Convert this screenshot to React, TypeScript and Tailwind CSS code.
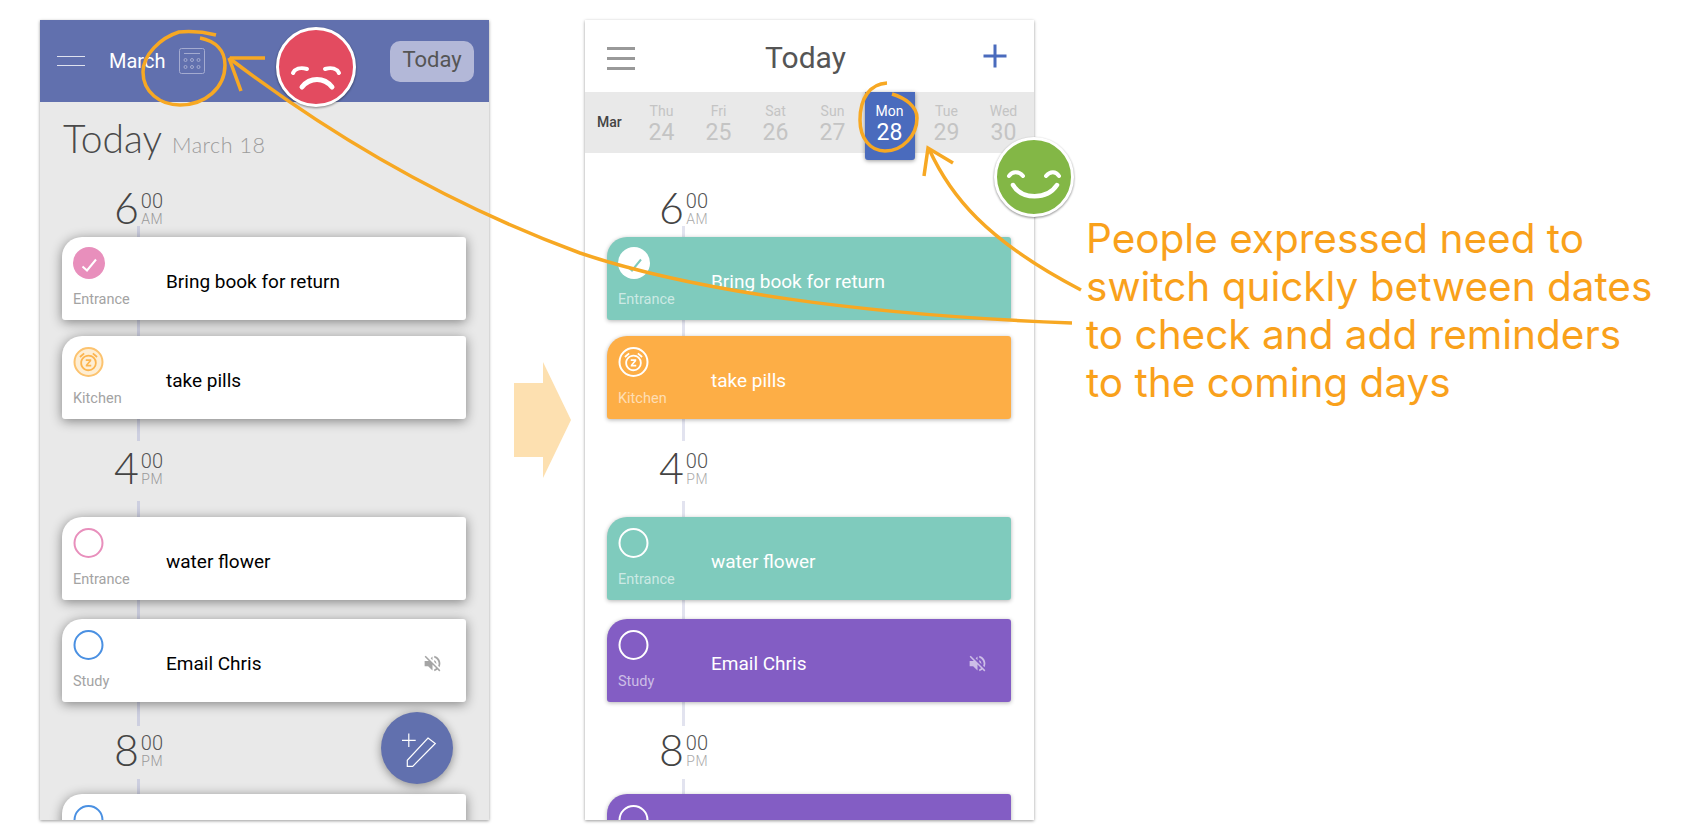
import type { ReactNode } from 'react';
import { MdSnooze, MdVolumeOff } from 'react-icons/md';

const roboto = { fontFamily: 'Roboto, "Liberation Sans", sans-serif' };

interface CardProps {
  bg: string;
  label?: string;
  title?: string;
  icon: ReactNode;
  muted?: boolean;
  shadow: string;
  textClass: string;
  labelClass: string;
  mutedClass?: string;
}

function Card({ bg, label, title, icon, muted, shadow, textClass, labelClass, mutedClass }: CardProps) {
  return (
    <div className={`relative flex h-[83px] shrink-0 items-center rounded-tl-[20px] rounded-tr-[3px] rounded-br-[3px] rounded-bl-[3px] ${bg} ${shadow}`}>
      <div className="flex h-full w-[104px] shrink-0 flex-col pl-[11px] pt-[10px]">
        <div className="h-[32px] w-[32px]">{icon}</div>
        <div className={`mt-[12px] text-[14.5px] leading-[18px] ${labelClass}`}>{label}</div>
      </div>
      <div className={`flex-1 pt-[7px] text-[19px] leading-[24px] ${textClass}`}>{title}</div>
      {muted && <MdVolumeOff className={`mr-[23px] mt-[6px] text-[21px] ${mutedClass}`} />}
    </div>
  );
}

function Ring({ color }: { color: string }) {
  return <div className={`h-[30px] w-[30px] translate-x-[0.5px] translate-y-[1px] rounded-full border-2 ${color}`} />;
}

function Snooze({ color }: { color: string }) {
  return (
    <div className={`flex h-[30px] w-[30px] translate-x-[0.5px] translate-y-[1px] items-center justify-center rounded-full border-2 text-[22px] ${color}`}>
      <MdSnooze />
    </div>
  );
}

function Check({ circle, stroke }: { circle: string; stroke: string }) {
  return (
    <svg viewBox="0 0 32 32" className="h-[32px] w-[32px]">
      <circle cx="16" cy="16" r="16" className={circle} />
      <path d="M9.5 19.5l4.5 4 9-11" fill="none" strokeWidth="2" className={stroke} />
    </svg>
  );
}

function Stem({ className, color }: { className: string; color: string }) {
  return <div className={`ml-[97px] w-[3px] shrink-0 ${color} ${className}`} />;
}

function TimeRow({ hour, unit, className, unitClass }: { hour: string; unit: string; className: string; unitClass: string }) {
  return (
    <div className={`flex h-[36px] shrink-0 pl-[74px] ${className}`}>
      <div className="w-[27px] font-light text-[#444] text-[43px] leading-[36px]" style={{ fontFamily: 'Lato, sans-serif' }}>{hour}</div>
      <div className="flex w-[22px] flex-col items-end" style={roboto}>
        <div className="mt-[2px] text-[20px] font-light leading-[18px] text-[#555]">00</div>
        <div className={`mt-[2px] text-[14px] font-light tracking-[0.5px] leading-[15px] ${unitClass}`}>{unit}</div>
      </div>
    </div>
  );
}

function Timeline({ variant }: { variant: 'before' | 'after' }) {
  const before = variant === 'before';
  const shadow = before ? 'shadow-[0_2px_12px_rgba(0,0,0,0.45)]' : 'shadow-[0_1px_4px_rgba(0,0,0,0.3)]';
  const stem = before ? 'bg-[#cdcfe0]' : 'bg-[#e2e3ef]';
  const textClass = before ? 'text-black' : 'text-white';
  const labelClass = before ? 'text-[#a3a3a3]' : 'text-white/60';
  const unitClass = before ? 'text-[#999]' : 'text-[#aaa]';
  const mutedClass = before ? 'text-[#a5a5a5]' : 'text-white/60';
  const bg = (color: string) => (before ? 'bg-white' : color);
  const common = { shadow, textClass, labelClass };

  return (
    <div className="flex flex-col">
      <TimeRow hour="6" unit="AM" className="" unitClass={unitClass} />
      <Stem className="h-[11px]" color={stem} />
      <div className="flex flex-col pl-[22px] pr-[23px]">
        <Card {...common} bg={bg('bg-[#7fcbbd]')} label="Entrance" title="Bring book for return"
          icon={before ? <Check circle="fill-[#e88fbc]" stroke="stroke-white" /> : <Check circle="fill-white" stroke="stroke-[#7fcbbd]" />} />
      </div>
      <Stem className="h-[16px]" color={stem} />
      <div className="flex flex-col pl-[22px] pr-[23px]">
        <Card {...common} bg={bg('bg-[#fdae46]')} label="Kitchen" title="take pills"
          icon={<Snooze color={before ? 'border-[#fcc36f] bg-[#feeed4] text-[#fcb54f]' : 'border-white text-white'} />} />
      </div>
      <Stem className="h-[22px]" color={stem} />
      <TimeRow hour="4" unit="PM" className="mt-[9px] mb-[15px]" unitClass={unitClass} />
      <Stem className="h-[16px]" color={stem} />
      <div className="flex flex-col pl-[22px] pr-[23px]">
        <Card {...common} bg={bg('bg-[#7fcbbd]')} label="Entrance" title="water flower"
          icon={<Ring color={before ? 'border-[#e88fbc]' : 'border-white'} />} />
      </div>
      <Stem className="h-[19px]" color={stem} />
      <div className="flex flex-col pl-[22px] pr-[23px]">
        <Card {...common} bg={bg('bg-[#835dc4]')} label="Study" title="Email Chris" muted mutedClass={mutedClass}
          icon={<Ring color={before ? 'border-[#4a90e2]' : 'border-white'} />} />
      </div>
      <Stem className="h-[24px]" color={stem} />
      <TimeRow hour="8" unit="PM" className="mt-[6px] mb-[11px]" unitClass={unitClass} />
      <Stem className="h-[15px]" color={stem} />
      <div className="flex flex-col pl-[22px] pr-[23px]">
        <Card {...common} bg={bg('bg-[#835dc4]')} icon={<Ring color={before ? 'border-[#4a90e2]' : 'border-white'} />} />
      </div>
    </div>
  );
}

function BeforePhone() {
  return (
    <div className="relative h-[800px] w-[449px] shrink-0 overflow-hidden bg-[#e9e9e9] shadow-[0_1px_3px_rgba(0,0,0,0.4)]" style={roboto}>
      <div className="flex h-[82px] items-center bg-[#6170ae] pl-[17px] pr-[15px]">
        <div className="flex w-[52px] flex-col gap-[8px]">
          <div className="h-px w-[28px] bg-white/80" />
          <div className="h-px w-[28px] bg-white/80" />
        </div>
        <div className="text-[20px] text-white">March</div>
        <svg viewBox="0 0 26 26" className="ml-[14px] h-[26px] w-[26px]" fill="none" stroke="#a4abd0">
          <rect x="0.5" y="0.5" width="25" height="25" rx="2" />
          <path d="M5 5.5h16" />
          <circle cx="6.5" cy="12" r="1.5" />
          <circle cx="13" cy="12" r="1.5" />
          <circle cx="19.5" cy="12" r="1.5" />
          <circle cx="6.5" cy="19" r="1.5" />
          <circle cx="13" cy="19" r="1.5" />
          <circle cx="19.5" cy="19" r="1.5" />
        </svg>
        <div className="ml-auto flex h-[41px] w-[84px] items-center justify-center rounded-[10px] bg-[#b3b8d8] pb-[3px] text-[22px] text-[#555]">Today</div>
      </div>
      <div className="flex h-[88px] items-baseline pl-[23px] pt-[7px]" style={{ fontFamily: 'Lato, sans-serif' }}>
        <span className="text-[39px] font-light text-[#4a4a4a]">Today</span>
        <span className="ml-[10px] text-[21.5px] font-light tracking-[0.5px] text-[#9b9b9b]">March 18</span>
      </div>
      <Timeline variant="before" />
      <div className="absolute left-[341px] top-[692px] flex h-[72px] w-[72px] items-center justify-center rounded-full bg-[#6170ae] shadow-[0_2px_10px_rgba(0,0,0,0.4)]">
        <svg viewBox="0 0 40 40" className="h-[40px] w-[40px]" fill="none" stroke="#fff" strokeWidth="1.2">
          <path d="M5 12.3H18.7M11.8 5.5V19" />
          <path d="M31 10L38.3 15.5L15.7 38.3H10.3V32.3z" />
        </svg>
      </div>
    </div>
  );
}

const days = [
  ['Thu', '24'],
  ['Fri', '25'],
  ['Sat', '26'],
  ['Sun', '27'],
  ['Mon', '28'],
  ['Tue', '29'],
  ['Wed', '30'],
];

function AfterPhone() {
  return (
    <div className="relative h-[800px] w-[449px] shrink-0 overflow-hidden bg-white shadow-[0_1px_3px_rgba(0,0,0,0.4)]" style={roboto}>
      <div className="flex h-[72px] items-center justify-between pl-[22px] pr-[27px]">
        <div className="mt-[4px] flex w-[28px] flex-col gap-[7px]">
          <div className="h-[3px] bg-[#999]" />
          <div className="h-[3px] bg-[#999]" />
          <div className="h-[3px] bg-[#999]" />
        </div>
        <div className="mr-[7px] mt-[2px] text-[30px] text-[#555]">Today</div>
        <svg viewBox="0 0 24 24" className="h-[24px] w-[24px]" fill="none" stroke="#4a6bbd" strokeWidth="3">
          <path d="M12 0.5v23M0.5 12h23" />
        </svg>
      </div>
      <div className="flex h-[61px] items-center bg-[#e9e9e9] pl-[12px]">
        <div className="w-[36px] text-[14px] font-medium text-[#444]">Mar</div>
        {days.map(([name, num]) => {
          const selected = name === 'Mon';
          return (
            <div key={name} className={`flex h-[61px] w-[57px] flex-col items-center ${selected ? 'text-white' : 'text-[#c4c4c4]'}`}>
              <div className={`flex flex-col items-center pt-[10px] ${selected ? 'h-[68px] w-[50px] shrink-0 rounded-b-[3px] bg-[#4a6bbd] shadow-[0_1px_4px_rgba(0,0,0,0.4)]' : ''}`}>
                <div className="text-[14px] leading-[18px]">{name}</div>
                <div className="text-[23px] leading-[26px]">{num}</div>
              </div>
            </div>
          );
        })}
      </div>
      <div className="pt-[37px]">
        <Timeline variant="after" />
      </div>
    </div>
  );
}

function Overlay() {
  return (
    <svg viewBox="0 0 1691 835" className="pointer-events-none absolute left-0 top-0 h-[835px] w-[1691px]" fill="none">
      <g stroke="#f7a823" strokeWidth="3.5">
        <path d="M216 35C200 31 190 31 179 32C160 38 143 55 143 72C143 92 160 105 180 105C205 105 225 88 225 65C225 50 215 41 200 38" />
        <path d="M265 58H230M229 58L241 91" />
        <path d="M229 58C330 135 450 205 580 253C690 290 860 315 1072 323" />
        <path d="M887 83C870 84 860 98 860 120C860 138 870 151 885 151C903 151 917 135 917 118C917 106 905 98 892 94" />
        <path d="M953 163L928 148L924 176" />
        <path d="M929 149C950 195 985 240 1081 290" />
      </g>
      <g className="drop-shadow-[0_1px_1px_rgba(0,0,0,0.45)]">
        <circle cx="316" cy="67" r="38.5" fill="#e34b60" stroke="#fff" strokeWidth="3" />
      </g>
      <g stroke="#fff" strokeLinecap="round">
        <path d="M293 73C295 69 300 67 307 69M339 73C337 69 332 67 325 69" strokeWidth="4" />
        <path d="M302 87C310 77 324 77 332 87" strokeWidth="5" />
      </g>
      <g className="drop-shadow-[0_1px_1px_rgba(0,0,0,0.45)]">
        <circle cx="1034" cy="177" r="38.5" fill="#83b746" stroke="#fff" strokeWidth="3" />
      </g>
      <g stroke="#fff" strokeLinecap="round">
        <path d="M1009 176C1012 171 1019 171 1023 176M1046 176C1050 171 1056 171 1059 176" strokeWidth="4" />
        <path d="M1013 185C1022 200 1047 200 1057 185" strokeWidth="4.5" />
      </g>
    </svg>
  );
}

export default function App() {
  return (
    <div className="relative flex h-[835px] w-[1691px] items-start overflow-hidden bg-white pl-[40px] pt-[20px]">
      <BeforePhone />
      <div className="flex h-[800px] w-[96px] shrink-0 items-center pl-[25px]">
        <svg viewBox="0 0 57 116" className="h-[116px] w-[57px]">
          <path d="M0 21H29V0L57 58L29 116V95H0z" fill="#fde0b0" />
        </svg>
      </div>
      <AfterPhone />
      <div className="ml-[52px] mt-[195px] whitespace-nowrap text-[40.5px] leading-[48px] text-[#f9a11b]" style={{ fontFamily: 'Inter, sans-serif' }}>
        <div>People expressed need to</div>
        <div>switch quickly between dates</div>
        <div>to check and add reminders</div>
        <div>to the coming days</div>
      </div>
      <Overlay />
    </div>
  );
}
